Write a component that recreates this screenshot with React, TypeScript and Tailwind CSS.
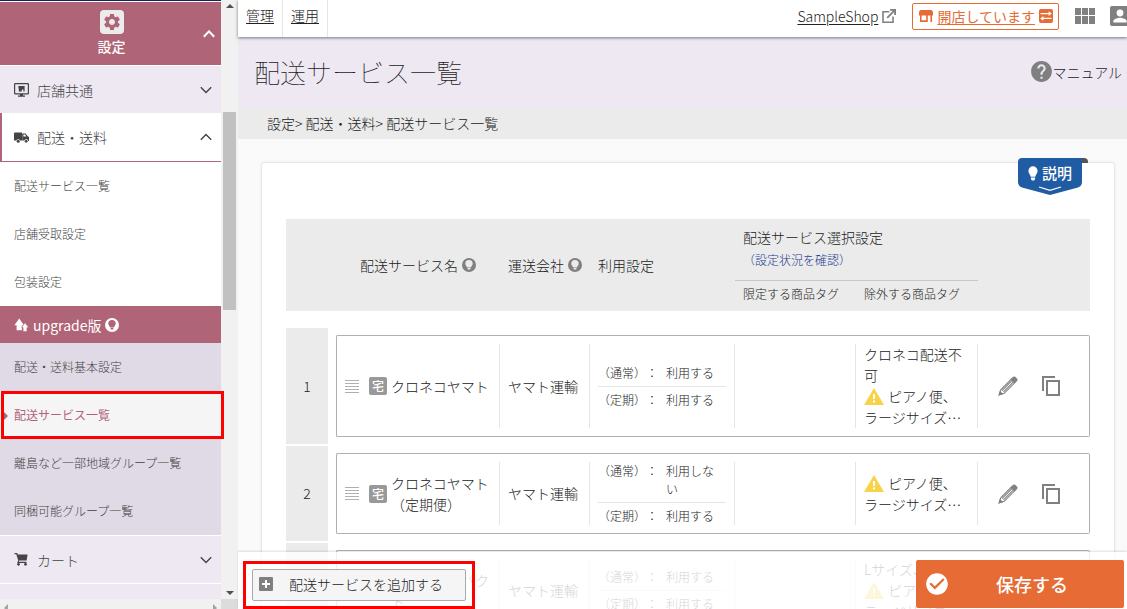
import React from "react";
import { MdSettings, MdHelp, MdCheckCircle } from "react-icons/md";

type IconProps = { className?: string };

function ChevronIcon({ up = false, bold = false }: { up?: boolean; bold?: boolean }) {
  return (
    <svg viewBox="0 0 12 8" className="w-3 h-2 shrink-0" fill="none" stroke="currentColor" strokeWidth={bold ? 2 : 1.4}>
      <path d={up ? "M0.8 6.8 L6 1.4 L11.2 6.8" : "M0.8 1.2 L6 6.6 L11.2 1.2"} />
    </svg>
  );
}

function MonitorIcon({ className }: IconProps) {
  return (
    <svg viewBox="0 0 15 14" className={className}>
      <rect x="0.6" y="0.6" width="13.8" height="10.2" rx="0.6" fill="none" stroke="currentColor" strokeWidth="1.2" />
      <path d="M6 11h3v1.6h2v1.2H4v-1.2h2z" fill="currentColor" />
      <path d="M4.4 3h6.2v5.6H9.4V6.4H7.8v2.2H4.8V5.4h-.4z" fill="currentColor" />
    </svg>
  );
}

function TruckIcon({ className }: IconProps) {
  return (
    <svg viewBox="0 0 15 11" className={className} fill="currentColor">
      <path d="M0 1.5q0-1 1-1h7v8H6a2 2 0 0 0-3.6 0H0z" />
      <path fillRule="evenodd" d="M8.2 1.4h3.4l2.1 2.9 1.3 .8v4h-.8a2 2 0 0 0-3.8-.6H8.2zM9.4 2.6v2h3L11 2.6z" />
      <circle cx="4.2" cy="9.2" r="1.5" />
      <circle cx="12.2" cy="9.3" r="1.4" />
    </svg>
  );
}

function CartIcon({ className }: IconProps) {
  return (
    <svg viewBox="0 0 15 13" className={className} fill="currentColor">
      <path d="M0.5 0h2.7l.7 1.6h9.7l-1 5.8H5.2l-.4 1.4h7.7V10H3.2l1-2.4-1.9-6.3H.5z" />
      <circle cx="4.5" cy="11.3" r="1.4" />
      <circle cx="11.5" cy="11.3" r="1.4" />
    </svg>
  );
}

function UpgradeIcon({ className }: IconProps) {
  return (
    <svg viewBox="0 0 15 14" className={className} fill="currentColor">
      <path d="M5.2 0.4 10 7.2H7.9v5H2.6v-5H0.4z" />
      <path d="M11 4.8 14.7 9.6h-1.8v3.8H9.1V9.6H7.6z" stroke="#b06478" strokeWidth="0.5" />
    </svg>
  );
}

function TipIcon({ className }: IconProps) {
  return (
    <svg viewBox="0 0 14 14" className={className}>
      <circle cx="7" cy="7" r="7" fill="currentColor" />
      <path d="M7 2a3.7 3.7 0 0 0-3.7 3.7c0 1.5 1.2 2.2 1.9 3.7h3.6c.7-1.5 1.9-2.2 1.9-3.7A3.7 3.7 0 0 0 7 2zM5.6 10h2.8v1.5H5.6z" fill="var(--tip-fill, #ebebeb)" />
    </svg>
  );
}

function BulbIcon({ className }: IconProps) {
  return (
    <svg viewBox="0 0 10 15" className={className} fill="currentColor">
      <path d="M5 0.3A4.6 4.6 0 0 0 0.4 4.9c0 2.4 1.8 3.3 2.3 5.8h4.6c.5-2.5 2.3-3.4 2.3-5.8A4.6 4.6 0 0 0 5 0.3zM2.9 11.5h4.2v1.4l-1 1.5H3.9l-1-1.5z" />
    </svg>
  );
}

function ExternalIcon({ className }: IconProps) {
  return (
    <svg viewBox="0 0 14 14" className={className} fill="none" stroke="currentColor" strokeWidth="1.6">
      <path d="M7.4 2.8H1v10.4h10V7.4" />
      <path d="M8 0.9h5.1V6M12.8 1.2 5.2 8.8" strokeWidth="1.8" />
    </svg>
  );
}

function ShopIcon({ className }: IconProps) {
  return (
    <svg viewBox="0 0 14 12" className={className} fill="currentColor">
      <path d="M2 0h10a2 2 0 0 1 1.6 1l.4 1.6v2.8H0V2.6L.4 1A2 2 0 0 1 2 0z" />
      <path d="M1 5h1.6v5.2h4.6V5h1.6v7H1zM11.4 5H13v7h-1.6z" />
    </svg>
  );
}

function SwapIcon({ className }: IconProps) {
  return (
    <svg viewBox="0 0 14 14" className={className}>
      <rect width="14" height="14" rx="2" fill="currentColor" />
      <path d="M1.5 4.6h8.8M12.5 9.4H3.7" stroke="#fff" strokeWidth="1.4" />
      <path d="M9.6 2.2 12.8 4.6 9.6 7zM4.4 7 1.2 9.4l3.2 2.4z" fill="#fff" />
    </svg>
  );
}

function TilesIcon({ className }: IconProps) {
  return (
    <svg viewBox="0 0 20 16" className={className} fill="currentColor">
      <path d="M0 0h6v7H0zM7 0h6v7H7zM14 0h6v7h-6zM0 8h6v8H0zM7 8h6v8H7zM14 8h6v8h-6z" />
    </svg>
  );
}

function AccountIcon({ className }: IconProps) {
  return (
    <svg viewBox="0 0 20 20" className={className}>
      <rect width="20" height="20" rx="2" fill="currentColor" />
      <circle cx="10" cy="7" r="3.4" fill="#fff" />
      <path d="M3.4 16.6v-1.4c0-2.2 4.4-3.4 6.6-3.4s6.6 1.2 6.6 3.4v1.4z" fill="#fff" />
    </svg>
  );
}

function PencilIcon({ className }: IconProps) {
  return (
    <svg viewBox="0 0 22 22" className={className} fill="none" stroke="currentColor" strokeWidth="1.2">
      <path d="M1.4 20.6 3 15.2 14.8 3.4 18.6 7.2 6.8 19z" />
      <path d="M14.4 3.8 17 1.4q.8-.6 1.6 0l2 2q.7.8 0 1.6l-2.4 2.4z" fill="currentColor" />
      <path d="M4.4 16 15.6 4.9M6 17.4 17.2 6.3" />
      <path d="M1.2 20.8 2.3 17.4 4.6 19.7z" fill="currentColor" />
    </svg>
  );
}

function CopyIcon({ className }: IconProps) {
  return (
    <svg viewBox="0 0 18 20" className={className} fill="none" stroke="currentColor" strokeWidth="2">
      <path d="M1 15V1h12" />
      <path d="M5 5h12v14H5z" />
    </svg>
  );
}

function WarningIcon({ className }: IconProps) {
  return (
    <svg viewBox="0 0 20 17" className={className}>
      <path d="M10 0 20 17H0z" fill="#f8d347" />
      <path d="M9 6h2v5H9zM9 12.5h2v2H9z" fill="#fff" />
    </svg>
  );
}

const shippingMenu = ["配送サービス一覧", "店舗受取設定", "包装設定"];
const upgradeMenu = ["配送・送料基本設定", "配送サービス一覧", "離島など一部地域グループ一覧", "同梱可能グループ一覧"];

const services = [
  { name: "クロネコヤマト", carrier: "ヤマト運輸", normal: "利用する", regular: "利用する", exclude: "クロネコ配送不可" },
  { name: "クロネコヤマト（定期便）", carrier: "ヤマト運輸", normal: "利用しない", regular: "利用する", exclude: "" },
  { name: "宅急便コンパクト", carrier: "ヤマト運輸", normal: "利用する", regular: "利用する", exclude: "Lサイズ、" },
];

function Sidebar() {
  return (
    <aside className="w-[238px] shrink-0 flex flex-col text-[#444]">
      <div className="flex-1 min-h-0 flex">
        <nav className="flex-1 min-w-0 flex flex-col bg-[#eee8f3]">
          <div className="h-0.5 shrink-0 bg-[#1f1f55] border-b border-white" />
          <button className="h-16 shrink-0 flex items-center bg-[#b06478] text-white border-b border-white">
            <span className="flex-1 pl-5 flex flex-col items-center">
              <span className="size-6 flex items-center justify-center rounded-sm bg-[#ebebeb] text-[#b06478]">
                <MdSettings className="size-5" />
              </span>
              <span className="text-sm leading-6 font-medium">設定</span>
            </span>
            <span className="pr-1.5">
              <ChevronIcon up bold />
            </span>
          </button>
          <button className="h-[47px] shrink-0 flex items-center gap-2 pl-3.5 pr-[9px] text-sm">
            <MonitorIcon className="w-[15px] h-3.5" />
            <span className="flex-1 text-left">店舗共通</span>
            <ChevronIcon />
          </button>
          <button className="h-[49px] shrink-0 flex items-center gap-2 pl-3 pr-[9px] text-sm bg-white border-l-2 border-b border-[#b06478]">
            <TruckIcon className="w-[15px] h-[11px]" />
            <span className="flex-1 text-left">配送・送料</span>
            <ChevronIcon up />
          </button>
          <ul className="shrink-0 bg-white text-xs">
            {shippingMenu.map((label) => (
              <li key={label}>
                <a href="#" className="h-12 flex items-center pl-3.5">{label}</a>
              </li>
            ))}
          </ul>
          <div className="h-[37px] shrink-0 flex items-center gap-1 pl-3.5 text-sm font-normal bg-[#b06478] text-white [--tip-fill:#b06478]">
            <UpgradeIcon className="w-[15px] h-3.5" />
            <span>upgrade版</span>
            <TipIcon className="size-3.5" />
          </div>
          <ul className="shrink-0 bg-[#e0d9e6] text-xs">
            {upgradeMenu.map((label, i) =>
              i === 1 ? (
                <li key={label} className="relative bg-[#f5f5f5] text-[#b06478] font-normal">
                  <a href="#" className="h-12 flex items-center pl-3.5">{label}</a>
                  <svg viewBox="0 0 8 10" className="absolute left-0 top-5 w-2 h-2.5" fill="currentColor">
                    <path d="M3 0 8 5 3 10z" />
                  </svg>
                  <span className="absolute left-px top-0 -right-[3px] bottom-0 border-3 border-[#f00]" />
                </li>
              ) : (
                <li key={label}>
                  <a href="#" className="h-12 flex items-center pl-3.5">{label}</a>
                </li>
              )
            )}
          </ul>
          <button className="h-[49px] shrink-0 flex items-center gap-2 pl-3.5 pr-[9px] text-sm border-y border-white">
            <CartIcon className="w-[15px] h-[13px]" />
            <span className="flex-1 text-left">カート</span>
            <ChevronIcon />
          </button>
        </nav>
        {/* Vertical scrollbar */}
        <div className="w-[17px] shrink-0 flex flex-col items-center justify-between bg-[#f1f1f1] py-1">
          <svg viewBox="0 0 8 4" className="w-2 h-1" fill="#505050"><path d="M0 4 4 0l4 4z" /></svg>
          <div className="flex-1 w-full flex flex-col px-0.5">
            <div className="grow-[104]" />
            <div className="grow-[197] bg-[#c1c1c1]" />
            <div className="grow-[280]" />
          </div>
          <svg viewBox="0 0 8 4" className="w-2 h-1" fill="#505050"><path d="M0 0 4 4l4-4z" /></svg>
        </div>
      </div>
      {/* Horizontal scrollbar */}
      <div className="h-2.5 shrink-0 flex">
        <div className="flex-1 flex items-end justify-between px-1 bg-[#f1f1f1]">
          <svg viewBox="0 0 4 8" className="w-1 h-[5px]" preserveAspectRatio="xMidYMin slice" fill="#a3a3a3"><path d="M4 0 0 4l4 4z" /></svg>
          <svg viewBox="0 0 4 8" className="w-1 h-[5px]" preserveAspectRatio="xMidYMin slice" fill="#a3a3a3"><path d="M0 0 4 4 0 8z" /></svg>
        </div>
        <div className="w-[17px] bg-[#dcdcdc]" />
      </div>
    </aside>
  );
}

function TopBar() {
  return (
    <header className="relative z-10 h-[37px] shrink-0 flex justify-between bg-white text-sm shadow-[0_1px_3px_rgba(0,0,0,0.5)]">
      <div className="flex">
        <a href="#" className="px-2 pt-[5px] border-r border-[#e5e5e5] underline underline-offset-2">管理</a>
        <a href="#" className="px-2 pt-[5px] border-r border-[#e5e5e5] underline underline-offset-2">運用</a>
      </div>
      <div className="flex items-center pb-[5px]">
        <a href="#" className="flex items-center gap-1">
          <span className="underline underline-offset-2">SampleShop</span>
          <ExternalIcon className="size-3.5 text-[#808080]" />
        </a>
        <button className="ml-4 h-[27px] flex items-center gap-1 pl-1.5 pr-[5px] border border-[#e66b34] rounded-xs text-[#e66b34] font-normal">
          <ShopIcon className="w-3.5 h-3" />
          <span className="underline underline-offset-2">開店しています</span>
          <SwapIcon className="size-3.5" />
        </button>
        <button aria-label="アプリ一覧" className="ml-4 text-[#808080]">
          <TilesIcon className="w-5 h-4" />
        </button>
        <button aria-label="アカウント" className="ml-[15px] -mr-[3px] text-[#808080]">
          <AccountIcon className="size-5" />
        </button>
      </div>
    </header>
  );
}

function UsageLine({ label, value }: { label: string; value: string }) {
  return (
    <div className="flex">
      <span className="w-12 shrink-0 whitespace-nowrap">（{label}）</span>
      <span className="w-5 shrink-0">：</span>
      <span className="flex-1 pr-3">{value}</span>
    </div>
  );
}

function ServiceTable() {
  return (
    <table className="block w-full text-sm leading-[21px]">
      <thead className="block mb-[17px]">
        <tr className="grid grid-cols-[42px_172fr_90fr_145fr_121fr_122fr_112fr] grid-rows-[62px_30px] bg-[#ebebeb] text-left">
          <th className="col-start-2 row-span-2 flex items-center gap-1 pl-8 font-light">
            配送サービス名
            <TipIcon className="size-3.5 text-[#808080]" />
          </th>
          <th className="row-span-2 flex items-center gap-1 pl-2 font-light whitespace-nowrap">
            運送会社
            <TipIcon className="size-3.5 shrink-0 text-[#808080]" />
          </th>
          <th className="row-span-2 flex items-center pl-2 font-light">利用設定</th>
          <th className="col-span-2 flex flex-col pl-2 pt-2 font-light border-b border-[#c8c8c8]">
            配送サービス選択設定
            <a href="#" className="text-xs leading-6 text-[#1c3a90]">（設定状況を確認）</a>
          </th>
          <th className="col-start-5 row-start-2 flex items-center pl-2 pb-1 text-xs font-light">限定する商品タグ</th>
          <th className="col-start-6 row-start-2 flex items-center pl-2 pb-1 text-xs font-light">除外する商品タグ</th>
        </tr>
      </thead>
      <tbody className="flex flex-col gap-0.5">
        {services.map((s, i) => (
          <tr key={s.name} className="grid grid-cols-[42px_172fr_90fr_145fr_121fr_122fr_112fr]">
            <td className="flex items-center justify-center bg-[#ebebeb]">{i + 1}</td>
            <td className="flex my-[7px] ml-2 py-2 border-y border-l border-[#b0b0b0] rounded-l-xs">
              <div className="flex-1 flex items-center pl-2 border-r border-[#e5e5e5]">
                <svg viewBox="0 0 14 13" className="w-3.5 h-[13px] shrink-0" fill="#b0b0b0">
                  <path d="M0 0h14v1H0zM0 3h14v1H0zM0 6h14v1H0zM0 9h14v1H0zM0 12h14v1H0z" />
                </svg>
                <span className="ml-2.5 mr-1 size-[18px] shrink-0 flex items-center justify-center rounded-xs bg-[#999] text-white text-xs font-medium">宅</span>
                <span className="w-[98px]">{s.name}</span>
              </div>
            </td>
            <td className="flex my-[7px] py-2 border-y border-[#b0b0b0]">
              <div className="flex-1 flex items-center pl-2 border-r border-[#e5e5e5]">{s.carrier}</div>
            </td>
            <td className="flex my-[7px] py-2 border-y border-[#b0b0b0]">
              <div className="flex-1 flex flex-col justify-center px-2 text-xs leading-[18px] border-r border-[#e5e5e5]">
                <div className="pb-1 border-b border-[#e5e5e5]">
                  <UsageLine label="通常" value={s.normal} />
                </div>
                <div className="pt-1">
                  <UsageLine label="定期" value={s.regular} />
                </div>
              </div>
            </td>
            <td className="flex my-[7px] py-2 border-y border-[#b0b0b0]">
              <div className="flex-1 border-r border-[#e5e5e5]" />
            </td>
            <td className="flex my-[7px] py-2 border-y border-[#b0b0b0]">
              <div className="flex-1 flex flex-col justify-center pl-2 pr-3 border-r border-[#e5e5e5]">
                {s.exclude && <p>{s.exclude}</p>}
                <p className="flex items-center gap-1 whitespace-nowrap">
                  <WarningIcon className="w-5 h-[17px] shrink-0" />
                  ピアノ便、
                </p>
                <p className="whitespace-nowrap">ラージサイズ⋯</p>
              </div>
            </td>
            <td className="flex items-center gap-6 my-[7px] pl-5 border-y border-r border-[#b0b0b0] rounded-r-xs text-[#808080]">
              <button aria-label="編集">
                <PencilIcon className="size-5" />
              </button>
              <button aria-label="コピー">
                <CopyIcon className="w-[18px] h-5" />
              </button>
            </td>
          </tr>
        ))}
      </tbody>
    </table>
  );
}

function HelpRibbon() {
  return (
    <button className="absolute right-[26px] -top-[5px] w-[70px] h-[37px] flex text-white">
      <svg viewBox="0 0 70 37" className="absolute inset-0">
        <path d="M64 0h2q4 0 4 4v1h-6z" fill="#555" />
        <path d="M4 0h60v24q0 4-4 5.4L32 37 4 29.4Q0 28 0 24V4q0-4 4-4z" fill="#205ca4" />
        <path d="M21 29l11 3.4L43 29" fill="none" stroke="#fff" strokeWidth="1.3" />
      </svg>
      <span className="relative flex items-center gap-1 pl-2.5 h-[30px] text-[15px] font-medium">
        <BulbIcon className="w-2.5 h-[15px]" />
        説明
      </span>
    </button>
  );
}

export default function App() {
  return (
    <div className="relative h-screen flex overflow-hidden bg-[#fafafa] text-[#222] font-light font-['Noto_Sans_CJK_JP','Noto_Sans',sans-serif]">
      <Sidebar />

      <div className="relative flex-1 min-w-0 flex flex-col">
        <TopBar />

        <div className="h-[71px] shrink-0 flex items-center justify-between pl-4 pr-[5px] pb-0.5 bg-[#eee8f3]">
          <h1 className="text-[26px] font-thin">配送サービス一覧</h1>
          <a href="#" className="flex items-center text-sm">
            <MdHelp className="size-[25px] -mr-0.5 text-[#808080]" />
            マニュアル
          </a>
        </div>
        <div className="h-[31px] shrink-0 flex items-center pl-[29px] pb-0.5 bg-[#ebebeb] text-sm">
          設定&gt; 配送・送料&gt; 配送サービス一覧
        </div>

        <main className="flex-1 min-h-0 pt-6 pl-6 pr-[13px]">
          <section className="relative px-6 pt-14 pb-6 bg-white rounded-xs shadow-[0_0_3px_rgba(0,0,0,0.2)]">
            <HelpRibbon />
            <ServiceTable />
          </section>
        </main>

        {/* Action bar floating over the list */}
        <footer className="absolute inset-x-0 bottom-0 h-[57px] flex items-end justify-between pl-[5px] pr-[3px] bg-white/80 shadow-[0_-1px_2px_rgba(0,0,0,0.12)]">
          <div className="h-12 p-1.5 flex items-center border-3 border-[#f00]">
            <button className="h-8 w-[214px] flex items-center gap-4 pl-1.5 pb-0.5 text-sm bg-[#f5f5f5] border border-[#aaa] rounded-xs">
              <svg viewBox="0 0 14 14" className="size-3.5">
                <rect width="14" height="14" rx="1" fill="#808080" />
                <path d="M7 3v8M3 7h8" stroke="#fff" strokeWidth="2" />
              </svg>
              配送サービスを追加する
            </button>
          </div>
          <button className="mb-px h-12 w-[208px] flex items-center pl-2 bg-[#e66b34] text-white rounded-xs">
            <MdCheckCircle className="size-[26px]" />
            <span className="flex-1 pr-2.5 text-lg font-medium">保存する</span>
          </button>
        </footer>
      </div>
    </div>
  );
}
